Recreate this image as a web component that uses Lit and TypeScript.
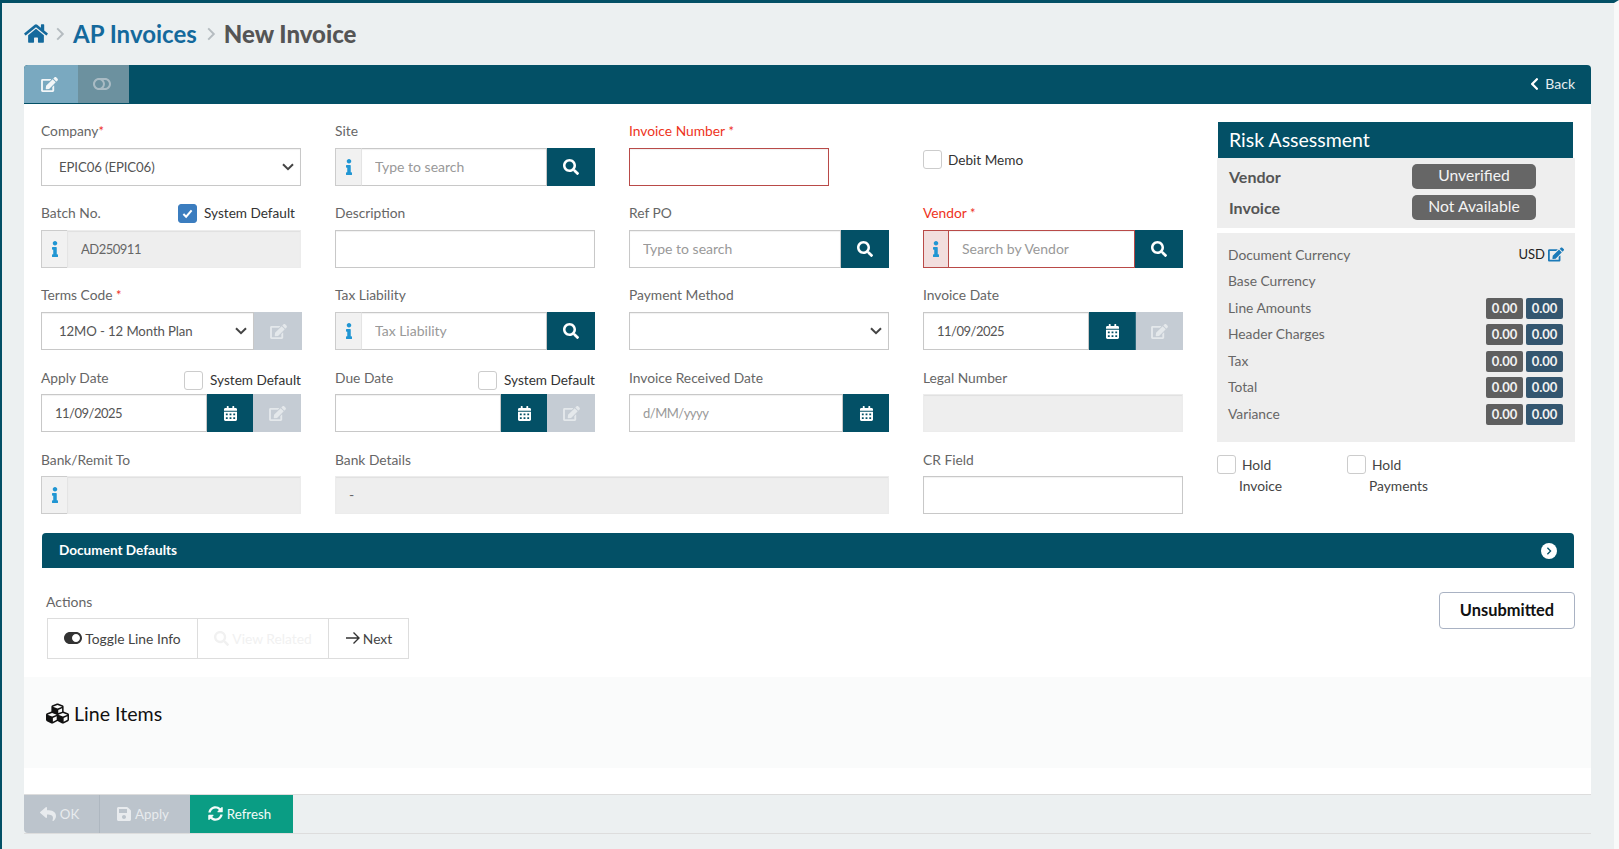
// AP Invoices / New Invoice form
import { LitElement, html, css, svg } from 'lit';
import { customElement } from 'lit/decorators.js';

// font-awesome 5 style icon paths: [viewBox, path]
const ICONS: Record<string, [string, string]> = {
    home: ['0 0 576 512', 'M280.37 148.26L96 300.11V464a16 16 0 0 0 16 16l112.06-.29a16 16 0 0 0 15.92-16V368a16 16 0 0 1 16-16h64a16 16 0 0 1 16 16v95.64a16 16 0 0 0 16 16.05L464 480a16 16 0 0 0 16-16V300L295.67 148.26a12.19 12.19 0 0 0-15.3 0zM571.6 251.47L488 182.56V44.05a12 12 0 0 0-12-12h-56a12 12 0 0 0-12 12v72.61L318.47 43a48 48 0 0 0-61 0L4.34 251.47a12 12 0 0 0-1.6 16.9l25.5 31A12 12 0 0 0 45.15 301l235.22-193.74a12.19 12.19 0 0 1 15.3 0L530.9 301a12 12 0 0 0 16.9-1.6l25.5-31a12 12 0 0 0-1.7-16.93z'],
    search: ['0 0 512 512', 'M505 442.7L405.3 343c-4.5-4.5-10.6-7-17-7H372c27.6-35.3 44-79.7 44-128C416 93.1 322.9 0 208 0S0 93.1 0 208s93.1 208 208 208c48.3 0 92.7-16.4 128-44v16.3c0 6.4 2.5 12.5 7 17l99.7 99.7c9.4 9.4 24.6 9.4 33.9 0l28.3-28.3c9.4-9.4 9.4-24.6.1-34zM208 336c-70.7 0-128-57.2-128-128 0-70.7 57.2-128 128-128 70.7 0 128 57.2 128 128 0 70.7-57.2 128-128 128z'],
    calendar: ['0 0 448 512', 'M0 464c0 26.5 21.5 48 48 48h352c26.5 0 48-21.5 48-48V192H0v272zm320-196c0-6.6 5.4-12 12-12h40c6.6 0 12 5.4 12 12v40c0 6.6-5.4 12-12 12h-40c-6.6 0-12-5.4-12-12v-40zm0 128c0-6.6 5.4-12 12-12h40c6.6 0 12 5.4 12 12v40c0 6.6-5.4 12-12 12h-40c-6.6 0-12-5.4-12-12v-40zM192 268c0-6.6 5.4-12 12-12h40c6.6 0 12 5.4 12 12v40c0 6.6-5.4 12-12 12h-40c-6.6 0-12-5.4-12-12v-40zm0 128c0-6.6 5.4-12 12-12h40c6.6 0 12 5.4 12 12v40c0 6.6-5.4 12-12 12h-40c-6.6 0-12-5.4-12-12v-40zM64 268c0-6.6 5.4-12 12-12h40c6.6 0 12 5.4 12 12v40c0 6.6-5.4 12-12 12H76c-6.6 0-12-5.4-12-12v-40zm0 128c0-6.6 5.4-12 12-12h40c6.6 0 12 5.4 12 12v40c0 6.6-5.4 12-12 12H76c-6.6 0-12-5.4-12-12v-40zM400 64h-48V16c0-8.8-7.2-16-16-16h-32c-8.8 0-16 7.2-16 16v48H160V16c0-8.8-7.2-16-16-16h-32c-8.8 0-16 7.2-16 16v48H48C21.5 64 0 85.5 0 112v48h448v-48c0-26.5-21.5-48-48-48z'],
    edit: ['0 0 576 512', 'M402.6 83.2l90.2 90.2c3.8 3.8 3.8 10 0 13.8L274.4 405.6l-92.8 10.3c-12.4 1.4-22.9-9.1-21.5-21.5l10.3-92.8L388.8 83.2c3.8-3.8 10-3.8 13.8 0zm162-22.9l-48.8-48.8c-15.2-15.2-39.9-15.2-55.2 0l-35.4 35.4c-3.8 3.8-3.8 10 0 13.8l90.2 90.2c3.8 3.8 10 3.8 13.8 0l35.4-35.4c15.2-15.3 15.2-40 0-55.2zM384 346.2V448H64V128h229.8c3.2 0 6.2-1.3 8.5-3.5l40-40c7.6-7.6 2.2-20.5-8.5-20.5H48C21.5 64 0 85.5 0 112v352c0 26.5 21.5 48 48 48h352c26.5 0 48-21.5 48-48V306.2c0-10.7-12.9-16-20.5-8.5l-40 40c-2.2 2.3-3.5 5.3-3.5 8.5z'],
    toggleOff: ['0 0 576 512', 'M384 64H192C86 64 0 150 0 256s86 192 192 192h192c106 0 192-86 192-192S490 64 384 64zM64 256c0-70.7 57.3-128 128-128 70.7 0 128 57.3 128 128 0 70.7-57.3 128-128 128-70.7 0-128-57.3-128-128zm320 128h-48.9c65.2-72.9 65.1-183.1 0-256H384c70.6 0 128 57.4 128 128s-57.4 128-128 128z'],
    toggleOn: ['0 0 576 512', 'M384 64H192C86 64 0 150 0 256s86 192 192 192h192c106 0 192-86 192-192S490 64 384 64zm0 320c-70.8 0-128-57.3-128-128 0-70.8 57.3-128 128-128 70.8 0 128 57.3 128 128 0 70.8-57.3 128-128 128z'],
    info: ['0 0 192 512', 'M20 424.229h20V279.771H20c-11.046 0-20-8.954-20-20V212c0-11.046 8.954-20 20-20h112c11.046 0 20 8.954 20 20v212.229h20c11.046 0 20 8.954 20 20V492c0 11.046-8.954 20-20 20H20c-11.046 0-20-8.954-20-20v-47.771c0-11.046 8.954-20 20-20zM96 0C56.235 0 24 32.235 24 72s32.235 72 72 72 72-32.235 72-72S135.764 0 96 0z'],
    cubes: ['0 0 512 512', 'M488.6 250.2L392 214V105.5c0-15-9.3-28.4-23.4-33.7l-100-37.5c-8.1-3.1-17.1-3.1-25.3 0l-100 37.5c-14.1 5.3-23.4 18.7-23.4 33.7V214l-96.6 36.2C9.3 255.5 0 268.9 0 283.9V394c0 13.6 7.7 26.1 19.9 32.2l100 50c10.1 5.1 22.1 5.1 32.2 0l103.9-52 103.9 52c10.1 5.1 22.1 5.1 32.2 0l100-50c12.2-6.1 19.9-18.6 19.9-32.2V283.9c0-15-9.3-28.4-23.4-33.7zM358 214.8l-85 31.9v-68.2l85-37v73.3zM154 104.1l102-38.2 102 38.2v.6l-102 41.4-102-41.4v-.6zm84 291.1l-85 42.5v-79.1l85-38.8v75.4zm0-112l-102 41.4-102-41.4v-.6l102-38.2 102 38.2v.6zm240 112l-85 42.5v-79.1l85-38.8v75.4zm0-112l-102 41.4-102-41.4v-.6l102-38.2 102 38.2v.6z'],
    reply: ['0 0 512 512', 'M8.309 189.836L184.313 37.851C199.719 24.546 224 35.347 224 56.015v80.053c160.629 1.839 288 34.032 288 186.258 0 61.441-39.581 122.309-83.333 154.132-13.653 9.931-33.111-2.533-28.077-18.631 45.344-145.012-21.507-183.51-176.59-185.742V360c0 20.7-24.3 31.453-39.687 18.164l-176.004-152c-11.071-9.562-11.086-26.753 0-36.328z'],
    save: ['0 0 448 512', 'M433.941 129.941l-83.882-83.882A48 48 0 0 0 316.118 32H48C21.49 32 0 53.49 0 80v352c0 26.51 21.49 48 48 48h352c26.51 0 48-21.49 48-48V163.882a48 48 0 0 0-14.059-33.941zM224 416c-35.346 0-64-28.654-64-64 0-35.346 28.654-64 64-64s64 28.654 64 64c0 35.346-28.654 64-64 64zm96-304.52V212c0 6.627-5.373 12-12 12H76c-6.627 0-12-5.373-12-12V108c0-6.627 5.373-12 12-12h228.52c3.183 0 6.235 1.264 8.485 3.515l3.48 3.48A11.996 11.996 0 0 1 320 111.48z'],
    refresh: ['0 0 512 512', 'M370.72 133.28C339.458 104.008 298.888 87.962 255.848 88c-77.458.068-144.328 53.178-162.791 126.85-1.344 5.363-6.122 9.15-11.651 9.15H24.103c-7.498 0-13.194-6.807-11.807-14.176C33.933 94.924 134.813 8 256 8c66.448 0 126.791 26.136 171.315 68.685L463.03 40.97C478.149 25.851 504 36.559 504 57.941V192c0 13.255-10.745 24-24 24H345.941c-21.382 0-32.09-25.851-16.971-40.971l41.75-41.749zM32 296h134.059c21.382 0 32.09 25.851 16.971 40.971l-41.75 41.75c31.262 29.273 71.835 45.319 114.876 45.28 77.418-.07 144.315-53.144 162.787-126.849 1.344-5.363 6.122-9.15 11.651-9.15h57.304c7.498 0 13.194 6.807 11.807 14.176C478.067 417.076 377.187 504 256 504c-66.448 0-126.791-26.136-171.315-68.685L48.97 471.03C33.851 486.149 8 475.441 8 454.059V320c0-13.255 10.745-24 24-24z'],
    back: ['0 0 320 512', 'M34.52 239.03L228.87 44.69c9.37-9.37 24.57-9.37 33.94 0l22.67 22.67c9.36 9.36 9.37 24.52.04 33.9L131.49 256l154.02 154.75c9.34 9.38 9.32 24.54-.04 33.9l-22.67 22.67c-9.37 9.37-24.57 9.37-33.94 0L34.52 272.97c-9.37-9.37-9.37-24.57 0-33.94z'],
};

function icon(name: string, w: number, color = 'currentColor', h = w) {
    const [box, d] = ICONS[name];
    return html`<svg width=${w} height=${h} viewBox=${box} fill=${color}>${svg`<path d=${d}></path>`}</svg>`;
}

const totals = ['Line Amounts', 'Header Charges', 'Tax', 'Total', 'Variance'];

@customElement('app-root')
export class AppRoot extends LitElement {
    static styles = css`
        :host {
            display: block;
            box-sizing: border-box;
            height: 849px;
            overflow: hidden;
            background: #ecf0f1;
            border-top: 3px solid #035066;
            border-left: 2px solid #035066;
            border-right: 5px solid #f8f9f9;
            font-family: Lato, "Noto Sans", sans-serif;
            font-size: 13.8px;
            color: #666;
        }
        * { box-sizing: border-box; }
        .page { padding: 0 23px 0 22px; }

        /* 상단 경로 */
        .crumbs { height: 62px; display: flex; align-items: center; font-size: 24px; font-weight: 700; padding-bottom: 1px; }
        .crumbs a { color: #14699c; }
        .crumbs b { color: #555; }
        .crumbs .sep { margin: 0 6px 0 5px; display: flex; }
        .crumbs .sep.next { margin: 0 6px 0 7px; }

        .toolbar {
            height: 39px;
            background: #035066;
            border-radius: 4px 4px 0 0;
            display: flex;
            color: #fff;
            overflow: hidden;
        }
        .tab { height: 38px; display: flex; align-items: center; justify-content: center; padding-right: 3px; }
        .tab.one { width: 54px; background: #7aa9c0; color: #f2f6f8; }
        .tab.two { width: 51px; background: #6c919f; color: #a9bbc4; }
        .back { margin-left: auto; padding: 0 16px 2px 0; display: flex; align-items: center; gap: 6px; font-size: 14px; color: #e6edf0; }

        .panel { background: #fff; height: 690px; }
        .form { display: flex; gap: 34px; padding: 18px 16px 0 17px; }
        .grid { display: grid; grid-template-columns: repeat(4, 260px); grid-template-rows: repeat(5, 64px); gap: 18px 34px; flex: none; }
        .side { width: 358px; flex: none; }

        .head { height: 26px; display: flex; justify-content: space-between; align-items: flex-start; line-height: 18px; white-space: nowrap; }
        .head.low { line-height: 20px; }
        .head.mid { line-height: 20px; }
        .req { color: #ee2f1f; font-size: 13px; line-height: 0; }
        .red { color: #ee3322; }
        .opt { display: flex; align-items: center; gap: 7px; color: #333; line-height: 20px; font-size: 13.6px; }
        .opt.sd { margin-top: -1px; }
        .opt.sd span:last-child { margin-right: 6px; }
        .opt.ad { margin-top: 2px; }
        .opt.dm { padding-top: 28px; align-items: flex-start; gap: 6px; }
        .cb { width: 19px; height: 19px; border: 1px solid #ccc; border-radius: 3px; background: #fff; flex: none; display: flex; align-items: center; justify-content: center; }
        .cb.on { background: #3b7dbf; border-color: #3b7dbf; }

        .ctl { display: flex; height: 38px; }
        .ctl.wide { margin-right: -1px; }
        .ctl.short { width: 200px; }
        input, select {
            flex: 1;
            min-width: 0;
            width: 100%;
            height: 38px;
            border: 1px solid #c8c8c8;
            border-radius: 0;
            background: #fff;
            outline: none;
            padding: 0 13px 2px;
            font: inherit;
            font-size: 14px;
            color: #555;
            box-shadow: inset 0 1px 1px rgba(0, 0, 0, .06);
        }
        select { appearance: none; padding: 0 13px 0 17px; font-size: 13.2px; letter-spacing: -.1px; }
        input::placeholder { color: #999; opacity: 1; }
        input[disabled] { background: #eee; border-color: #ececec; color: #666; }
        input.bad { border-color: #b94a48; }
        input.num { font-size: 13px; letter-spacing: -.5px; padding-bottom: 0; }
        .sel { position: relative; flex: 1; min-width: 0; display: flex; }
        .sel svg { position: absolute; right: 7px; top: 15px; pointer-events: none; }
        .addon { width: 26px; flex: none; border: 1px solid #ccc; border-right: 0; background: #f1f1f1; display: flex; align-items: center; justify-content: center; }
        .addon.bad { background: #f2dede; border-color: #b94a48; border-right: 1px solid #b94a48; }
        .addon + input { border-left-color: #e4e4e4; }
        .addon.bad + input { border-left: 0; }
        .btn { flex: none; width: 48px; background: #035066; color: #fff; display: flex; align-items: center; justify-content: center; }
        .btn.cal { width: 46px; }
        .btn.off { background: #c5ccd4; color: #e4e8eb; }
        .btn.off.sep { border-left: 1px solid #2d6c80; }

        /* 우측 요약 */
        .risk-title { margin-left: 1px; margin-right: 2px; height: 36px; background: #035066; color: #fff; font-size: 19.5px; line-height: 36px; padding-left: 11px; }
        .risk { height: 70px; background: #eee; padding: 6px 0 0 12px; display: grid; grid-template-columns: 183px 124px; grid-auto-rows: 25px; row-gap: 6px; font-size: 16px; font-weight: 700; color: #555; align-items: center; }
        .pill { height: 25px; border-radius: 5px; background: #666; color: #f4f4f4; font-size: 15.7px; font-weight: 400; text-align: center; line-height: 22px; }
        .sum { margin-top: 5px; height: 209px; background: #eee; padding: 8px 11px 0 11px; }
        .sum-row { height: 26.5px; display: flex; align-items: center; justify-content: space-between; }
        .usd { display: flex; align-items: center; gap: 3px; color: #222; font-size: 13px; }
        .nums { display: flex; gap: 3px; padding-right: 1px; margin-top: 2px; }
        .nums span { width: 37px; height: 21px; border-radius: 2px; background: #5f5f5f; color: #f2f2f2; font-size: 13px; font-weight: 700; text-align: center; line-height: 20px; }
        .nums span + span { background: #34566f; }
        .holds { display: flex; margin-top: 12px; color: #444; }
        .hold { width: 130px; line-height: 21px; }
        .hold .top { display: flex; align-items: center; gap: 6px; }
        .hold .sub { padding-left: 22px; }

        .bar { margin: 19px 17px 0 18px; height: 35px; background: #035066; border-radius: 4px 4px 0 0; color: #fff; font-weight: 700; display: flex; align-items: center; justify-content: space-between; padding: 0 17px 2px; font-size: 13.6px; }
        .dot { width: 16px; height: 16px; border-radius: 50%; background: #fff; display: flex; align-items: center; justify-content: center; margin-top: 2px; }

        .acts { display: flex; justify-content: space-between; padding: 0 16px 0 22px; height: 91px; }
        .acts h4 { margin: 25px 0 7px; font-weight: 400; font-size: 14px; line-height: 18px; color: #666; }
        .group { display: flex; height: 41px; margin-left: 1px; font-size: 13.8px; }
        .group div { border: 1px solid #ddd; display: flex; align-items: center; justify-content: center; gap: 3px; color: #444; padding-bottom: 1px; }
        .group div + div { border-left: 0; }
        .group .a { width: 151px; }
        .group .b { width: 131px; color: #f1f1f1; }
        .group .c { width: 80px; }
        .status { margin-top: 24px; width: 136px; height: 37px; border: 1px solid #a9b2c3; border-radius: 4px; color: #111; font-weight: 700; font-size: 16.4px; display: flex; align-items: center; justify-content: center; padding-bottom: 2px; }

        .lines { height: 91px; margin-top: 18px; background: #fafbfb; padding-left: 22px; }
        .lines h3 { margin: 0; padding-top: 24px; height: 48px; display: flex; align-items: center; gap: 5px; font-size: 19.6px; font-weight: 400; color: #111; }

        .foot { height: 40px; border-top: 1px solid #ddd; border-bottom: 1px solid #ddd; display: flex; font-size: 13.3px; }
        .foot div { display: flex; align-items: center; justify-content: center; gap: 4px; color: #e8ebee; background: #bcc4cc; padding: 0 4px 1px 0; }
        .foot .ok { width: 76px; border-right: 1px solid #aeb7c0; border-radius: 0 0 0 4px; }
        .foot .ap { width: 90px; }
        .foot .rf { width: 103px; background: #0a9d84; color: #f4fbf9; }
    `;

    private chev() {
        return html`<svg width="14" height="14" viewBox="0 0 10 10" fill="none" stroke="#b5bcc0" stroke-width="1.4"><path d="M3 1 L7 5 L3 9"></path></svg>`;
    }

    private checkbox(on = false) {
        return html`<span class="cb ${on ? 'on' : ''}">${on ? html`<svg width="11" height="11" viewBox="0 0 12 12" fill="none" stroke="#fff" stroke-width="2.2"><path d="M1.5 6.5 L4.5 9.5 L10.5 2.5"></path></svg>` : ''}</span>`;
    }

    private select(value: string) {
        return html`<span class="sel">
            <select><option>${value}</option></select>
            <svg width="12" height="8" viewBox="0 0 12 8" fill="none" stroke="#444" stroke-width="2"><path d="M1 1.2 L6 6.2 L11 1.2"></path></svg>
        </span>`;
    }

    private infoAddon(bad = false) {
        return html`<span class="addon ${bad ? 'bad' : ''}">${icon('info', 6, '#2196d3', 16)}</span>`;
    }

    private searchBtn() {
        return html`<span class="btn">${icon('search', 16)}</span>`;
    }

    private calBtn() {
        return html`<span class="btn cal">${icon('calendar', 13, 'currentColor', 15)}</span>`;
    }

    private editBtn(sep = false) {
        return html`<span class="btn off ${sep ? 'sep' : ''}">${icon('edit', 17, 'currentColor', 15)}</span>`;
    }

    render() {
        return html`
            <div class="page">
                <div class="crumbs">
                    ${icon('home', 24, '#14699c', 21)}
                    <span class="sep">${this.chev()}</span>
                    <a>AP Invoices</a>
                    <span class="sep next">${this.chev()}</span>
                    <b>New Invoice</b>
                </div>

                <div class="toolbar">
                    <div class="tab one">${icon('edit', 17, 'currentColor', 15)}</div>
                    <div class="tab two">${icon('toggleOff', 18, 'currentColor', 16)}</div>
                    <div class="back">
                        ${icon('back', 9, '#fff', 14)}
                        <span>Back</span>
                    </div>
                </div>

                <div class="panel">
                    <div class="form">
                        <div class="grid">
                            <div>
                                <div class="head"><span>Company<span class="req">*</span></span></div>
                                <div class="ctl">${this.select('EPIC06 (EPIC06)')}</div>
                            </div>
                            <div>
                                <div class="head"><span>Site</span></div>
                                <div class="ctl">${this.infoAddon()}<input placeholder="Type to search" />${this.searchBtn()}</div>
                            </div>
                            <div>
                                <div class="head"><span class="red">Invoice Number <span class="req">*</span></span></div>
                                <div class="ctl short"><input class="bad" /></div>
                            </div>
                            <div class="opt dm">${this.checkbox()}<span>Debit Memo</span></div>

                            <div>
                                <div class="head"><span>Batch No.</span><span class="opt sd">${this.checkbox(true)}<span>System Default</span></span></div>
                                <div class="ctl">${this.infoAddon()}<input class="num" disabled value="AD250911" /></div>
                            </div>
                            <div>
                                <div class="head"><span>Description</span></div>
                                <div class="ctl"><input /></div>
                            </div>
                            <div>
                                <div class="head"><span>Ref PO</span></div>
                                <div class="ctl"><input placeholder="Type to search" />${this.searchBtn()}</div>
                            </div>
                            <div>
                                <div class="head"><span class="red">Vendor <span class="req">*</span></span></div>
                                <div class="ctl">${this.infoAddon(true)}<input class="bad" placeholder="Search by Vendor" />${this.searchBtn()}</div>
                            </div>

                            <div>
                                <div class="head"><span>Terms Code <span class="req">*</span></span></div>
                                <div class="ctl wide">${this.select('12MO - 12 Month Plan')}${this.editBtn()}</div>
                            </div>
                            <div>
                                <div class="head"><span>Tax Liability</span></div>
                                <div class="ctl">${this.infoAddon()}<input placeholder="Tax Liability" />${this.searchBtn()}</div>
                            </div>
                            <div>
                                <div class="head"><span>Payment Method</span></div>
                                <div class="ctl">${this.select('')}</div>
                            </div>
                            <div>
                                <div class="head"><span>Invoice Date</span></div>
                                <div class="ctl"><input class="num" value="11/09/2025" />${this.calBtn()}${this.editBtn(true)}</div>
                            </div>

                            <div>
                                <div class="head low"><span>Apply Date</span><span class="opt ad">${this.checkbox()}<span>System Default</span></span></div>
                                <div class="ctl"><input class="num" value="11/09/2025" />${this.calBtn()}${this.editBtn()}</div>
                            </div>
                            <div>
                                <div class="head low"><span>Due Date</span><span class="opt ad">${this.checkbox()}<span>System Default</span></span></div>
                                <div class="ctl"><input />${this.calBtn()}${this.editBtn()}</div>
                            </div>
                            <div>
                                <div class="head low"><span>Invoice Received Date</span></div>
                                <div class="ctl"><input class="num" placeholder="d/MM/yyyy" />${this.calBtn()}</div>
                            </div>
                            <div>
                                <div class="head low"><span>Legal Number</span></div>
                                <div class="ctl"><input disabled /></div>
                            </div>

                            <div>
                                <div class="head mid"><span>Bank/Remit To</span></div>
                                <div class="ctl">${this.infoAddon()}<input disabled /></div>
                            </div>
                            <div style="grid-column: span 2">
                                <div class="head mid"><span>Bank Details</span></div>
                                <div class="ctl"><input disabled value="-" /></div>
                            </div>
                            <div>
                                <div class="head mid"><span>CR Field</span></div>
                                <div class="ctl"><input /></div>
                            </div>
                        </div>

                        <div class="side">
                            <div class="risk-title">Risk Assessment</div>
                            <div class="risk">
                                <span>Vendor</span><span class="pill">Unverified</span>
                                <span>Invoice</span><span class="pill">Not Available</span>
                            </div>
                            <div class="sum">
                                <div class="sum-row"><span>Document Currency</span><span class="usd">USD ${icon('edit', 16, '#1b7ab8', 15)}</span></div>
                                <div class="sum-row"><span>Base Currency</span></div>
                                ${totals.map(t => html`
                                    <div class="sum-row"><span>${t}</span><span class="nums"><span>0.00</span><span>0.00</span></span></div>
                                `)}
                            </div>
                            <div class="holds">
                                <div class="hold"><div class="top">${this.checkbox()}<span>Hold</span></div><div class="sub">Invoice</div></div>
                                <div class="hold"><div class="top">${this.checkbox()}<span>Hold</span></div><div class="sub">Payments</div></div>
                            </div>
                        </div>
                    </div>

                    <div class="bar">
                        <span>Document Defaults</span>
                        <span class="dot"><svg width="8" height="8" viewBox="0 0 10 10" fill="none" stroke="#035066" stroke-width="1.6"><path d="M3 1 L7 5 L3 9"></path></svg></span>
                    </div>

                    <div class="acts">
                        <div>
                            <h4>Actions</h4>
                            <div class="group">
                                <div class="a">${icon('toggleOn', 18, '#333', 16)}<span>Toggle Line Info</span></div>
                                <div class="b">${icon('search', 15, '#f1f1f1')}<span>View Related</span></div>
                                <div class="c">
                                    <svg width="15" height="14" viewBox="0 0 15 14" fill="none" stroke="#333" stroke-width="1.4"><path d="M1 7 H14 M8.5 1.5 L14 7 L8.5 12.5"></path></svg>
                                    <span>Next</span>
                                </div>
                            </div>
                        </div>
                        <div class="status">Unsubmitted</div>
                    </div>

                    <div class="lines">
                        <h3>${icon('cubes', 23, '#111')}<span>Line Items</span></h3>
                    </div>
                </div>

                <div class="foot">
                    <div class="ok">${icon('reply', 16)}<span>OK</span></div>
                    <div class="ap">${icon('save', 14, 'currentColor', 16)}<span>Apply</span></div>
                    <div class="rf">${icon('refresh', 15)}<span>Refresh</span></div>
                </div>
            </div>
        `;
    }
}

declare global {
    interface HTMLElementTagNameMap {
        'app-root': AppRoot;
    }
}
